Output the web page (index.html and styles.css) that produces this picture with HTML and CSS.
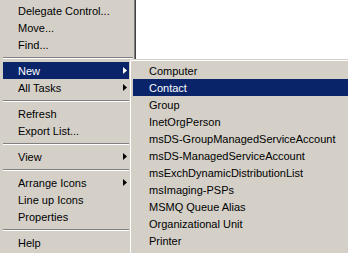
FILE: index.html
```html
<!DOCTYPE html>
<html lang="en">
<head>
  <meta charset="UTF-8">
  <meta name="viewport" content="width=device-width, initial-scale=1.0">
  <title>Context Menu</title>
  <link rel="stylesheet" href="styles.css">
</head>
<body>

<div class="desktop">
  <!-- main context menu -->
  <div class="menu">
    <div class="item">Delegate Control...</div>
    <div class="item">Move...</div>
    <div class="item">Find...</div>
    <div class="sep"></div>
    <div class="item active">New <span class="arrow"></span></div>
    <div class="item">All Tasks <span class="arrow"></span></div>
    <div class="sep"></div>
    <div class="item">Refresh</div>
    <div class="item">Export List...</div>
    <div class="sep"></div>
    <div class="item">View <span class="arrow"></span></div>
    <div class="sep"></div>
    <div class="item">Arrange Icons <span class="arrow"></span></div>
    <div class="item">Line up Icons</div>
    <div class="item">Properties</div>
    <div class="sep"></div>
    <div class="item">Help</div>
  </div>

  <!-- New submenu -->
  <div class="submenu">
    <div class="item">Computer</div>
    <div class="item active">Contact</div>
    <div class="item">Group</div>
    <div class="item">InetOrgPerson</div>
    <div class="item">msDS-GroupManagedServiceAccount</div>
    <div class="item">msDS-ManagedServiceAccount</div>
    <div class="item">msExchDynamicDistributionList</div>
    <div class="item">msImaging-PSPs</div>
    <div class="item">MSMQ Queue Alias</div>
    <div class="item">Organizational Unit</div>
    <div class="item">Printer</div>
  </div>
</div>

</body>
</html>
```

FILE: styles.css
```css
body {
  margin: 0;
  padding: 0;
  background: #ffffff;
  overflow: hidden;
}

.desktop {
  position: relative;
  height: 253px;
  font-family: "Liberation Sans", Arial, sans-serif;
  font-size: 11px;
  color: #000;
}

.menu {
  width: 132px;
  height: 251px;
  padding: 2px 0 0 3px;
  background: #d4d0c8;
  border-right: 1px solid #404040;
  box-shadow: inset -1px 0 #808080;
}

.item {
  display: flex;
  align-items: center;
  height: 17px;
  padding-left: 15px;
  white-space: nowrap;
}

.item.active {
  background: #0a246a;
  color: #fff;
}

.arrow {
  margin-left: auto;
  margin-right: 8px;
  width: 4px;
  height: 7px;
  background: #000;
  clip-path: polygon(0 0, 100% 50%, 0 100%);
}

.active .arrow {
  background: #fff;
}

.sep {
  height: 0;
  margin: 4px 2px 3px 0;
  border-top: 1px solid #808080;
  border-bottom: 1px solid #ffffff;
}

/* submenu opens over the main menu */
.submenu {
  position: absolute;
  left: 129px;
  top: 59px;
  right: -4px;
  bottom: -4px;
  padding: 3px 0 0 4px;
  background: #d4d0c8;
  box-shadow: inset 1px 1px #d4d0c8, inset 2px 2px #ffffff;
}

.submenu .item {
  padding-left: 16px;
}
```
